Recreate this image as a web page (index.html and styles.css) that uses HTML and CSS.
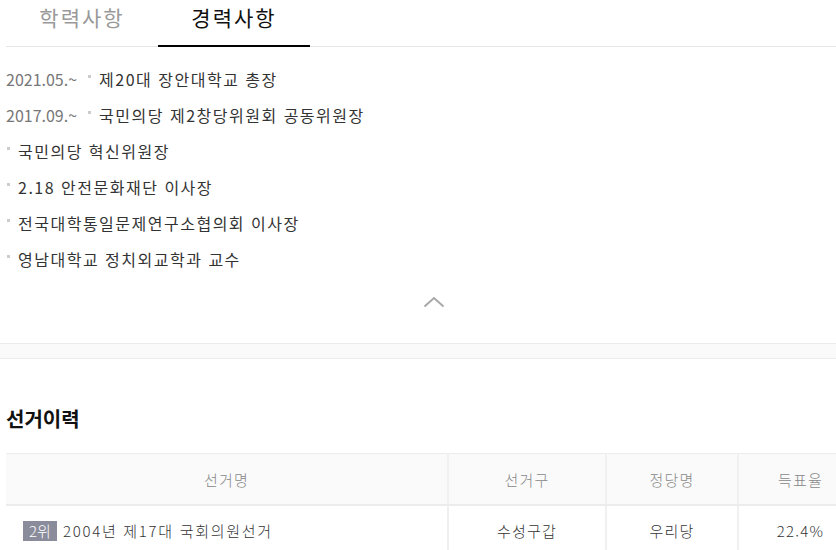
FILE: index.html
```html
<!DOCTYPE html>
<html lang="ko">
<head>
    <meta charset="UTF-8">
    <meta name="viewport" content="width=device-width, initial-scale=1.0">
    <title>경력사항</title>
    <link rel="stylesheet" href="styles.css">
</head>
<body>

<div class="wrap">
    <div class="tabs">
        <div class="tab">학력사항</div>
        <div class="tab active">경력사항</div>
    </div>

    <ul class="career">
        <li><span class="date">2021.05.~</span><span class="dot"></span><span class="txt">제20대 장안대학교 총장</span></li>
        <li><span class="date">2017.09.~</span><span class="dot"></span><span class="txt">국민의당 제2창당위원회 공동위원장</span></li>
        <li><span class="dot"></span><span class="txt">국민의당 혁신위원장</span></li>
        <li><span class="dot"></span><span class="txt">2.18 안전문화재단 이사장</span></li>
        <li><span class="dot"></span><span class="txt">전국대학통일문제연구소협의회 이사장</span></li>
        <li><span class="dot"></span><span class="txt">영남대학교 정치외교학과 교수</span></li>
    </ul>

    <div class="fold">
        <svg width="22" height="12" viewBox="0 0 22 12">
            <polyline points="1.5,10.5 11,2 20.5,10.5" fill="none" stroke="#a8a8a8" stroke-width="2"/>
        </svg>
    </div>
</div>

<div class="band"></div>

<div class="wrap">
    <h2 class="title">선거이력</h2>

    <table class="elect">
        <colgroup>
            <col class="c-name">
            <col class="c-area">
            <col class="c-party">
            <col class="c-rate">
        </colgroup>
        <thead>
            <tr>
                <th>선거명</th>
                <th>선거구</th>
                <th>정당명</th>
                <th>득표율</th>
            </tr>
        </thead>
        <tbody>
            <tr>
                <td class="left"><span class="rank">2위</span>2004년 제17대 국회의원선거</td>
                <td>수성구갑</td>
                <td>우리당</td>
                <td>22.4%</td>
            </tr>
        </tbody>
    </table>
</div>

</body>
</html>
```

FILE: styles.css
```css
body {
    font-family: "Noto Sans CJK KR", "Noto Sans", sans-serif;
    background-color: #fff;
    color: #333;
    margin: 0;
    padding: 0;
    width: 836px;
    overflow: hidden;
}

.wrap {
    margin-left: 6px;
    width: 856px;
}

.tabs {
    display: flex;
    border-bottom: 1px solid #e6e6e6;
}

.tab {
    width: 152px;
    height: 45px;
    line-height: 34px;
    font-size: 21px;
    letter-spacing: 2px;
    text-align: center;
    color: #999;
    border-bottom: 2px solid transparent;
    margin-bottom: -1px;
}

.tab.active {
    color: #111;
    border-bottom-color: #000;
}

.career {
    list-style: none;
    margin: 0;
    padding: 14px 0 0;
}

.career li {
    display: flex;
    align-items: center;
    height: 36px;
    font-size: 16px;
    color: #333;
}

.career .txt {
    letter-spacing: 1.5px;
}

.career .date {
    color: #777;
    margin-right: 10px;
}

.career .dot {
    width: 3px;
    height: 3px;
    background-color: #ccc;
    margin: 0 8px 0 1px;
    align-self: flex-start;
    margin-top: 14px;
}

.fold {
    height: 50px;
    display: flex;
    justify-content: center;
    align-items: center;
    margin-bottom: 16px;
}

.band {
    height: 14px;
    background-color: #fafafa;
    border-top: 1px solid #ececec;
    border-bottom: 1px solid #ececec;
}

.title {
    margin: 45px 0 19px;
    font-size: 20px;
    line-height: 30px;
    font-weight: bold;
    color: #111;
}

.elect {
    width: 856px;
    table-layout: fixed;
    border-collapse: collapse;
    font-size: 15px;
    font-weight: 300;
    letter-spacing: 1.2px;
}

.elect th {
    height: 48px;
    background-color: #fafafa;
    border-top: 1px solid #ececec;
    border-bottom: 2px solid #ececec;
    font-weight: 300;
    color: #888;
}

.elect th + th,
.elect td + td {
    border-left: 2px solid #f0f0f0;
}

.elect td {
    height: 46px;
    text-align: center;
    color: #333;
}

.elect .c-name { width: 442px; }
.elect .c-area { width: 158px; }
.elect .c-party { width: 132px; }

.elect td.left {
    text-align: left;
    padding-left: 17px;
    letter-spacing: 1.7px;
}

.rank {
    display: inline-block;
    width: 34px;
    height: 20px;
    line-height: 20px;
    letter-spacing: 0;
    text-align: center;
    background-color: #8a8c9b;
    color: #fff;
    margin-right: 6px;
}
```
